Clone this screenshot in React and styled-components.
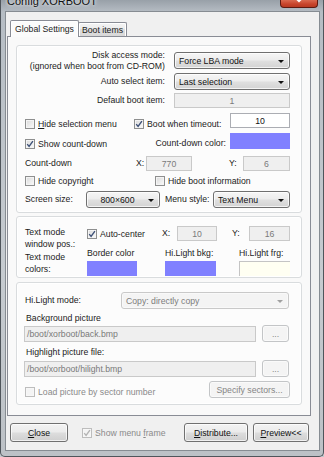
import styled, { createGlobalStyle } from 'styled-components';

const GlobalStyle = createGlobalStyle`
  html, body {
    margin: 0;
    padding: 0;
    background: #c3c8cd;
  }
  body {
    font-family: 'Liberation Sans', Arial, sans-serif;
    font-size: 8.7px;
    color: #1b1b1b;
  }
  * {
    box-sizing: border-box;
  }
`;

const Window = styled.div`
  width: 324px;
  height: 457px;
  display: flex;
  flex-direction: column;
  padding: 0 3px 5px 4px;
  border: 1px solid #4f555b;
  border-top: 0;
  border-radius: 0 0 5px 5px;
  background: linear-gradient(#98a0a8, #b6bdc4 12px, #c6cbd0 60%, #bcc1c6);
  overflow: hidden;
`;

const TitleBar = styled.div`
  height: 11px;
  flex: none;
  display: flex;
  justify-content: space-between;
  align-items: flex-start;
  overflow: hidden;
`;

const Caption = styled.div`
  margin: -6px 0 0 2px;
  font-size: 11px;
  line-height: 14px;
  color: #111;
  text-shadow: 0 0 5px #e8ecef, 0 0 3px #e8ecef;
`;

const CloseButton = styled.div`
  width: 38px;
  height: 8px;
  margin-right: 2px;
  display: flex;
  justify-content: center;
  align-items: flex-start;
  border: 1px solid #5e1a10;
  border-top: 0;
  border-radius: 0 0 4px 4px;
  background: linear-gradient(#d9694f, #c7432a 60%, #b83a22);
  overflow: hidden;
`;

const Client = styled.div`
  flex: 1;
  display: flex;
  flex-direction: column;
  background: #f0f0f0;
  border: 1px solid #868c92;
`;

const TabStrip = styled.div`
  display: flex;
  align-items: flex-end;
  height: 16px;
  margin-top: 8px;
  padding-left: 4px;
  position: relative;
  z-index: 1;
`;

const Tab = styled.div`
  height: ${(p) => (p.$active ? 17 : 14)}px;
  margin-bottom: ${(p) => (p.$active ? -1 : 0)}px;
  margin-left: ${(p) => (p.$active ? 0 : -1)}px;
  width: ${(p) => p.$w}px;
  display: flex;
  align-items: center;
  justify-content: center;
  border: 1px solid #898c95;
  border-bottom: 0;
  border-radius: 2px 2px 0 0;
  background: ${(p) => (p.$active ? '#fbfbfb' : 'linear-gradient(#f4f4f4, #ebebeb 50%, #dedede 50%, #d8d8d8)')};
  box-shadow: inset 1px 1px 0 #fff, inset -1px 0 0 #fff;
  padding-top: ${(p) => (p.$active ? 0 : 1)}px;
`;

const Panel = styled.div`
  width: 304px;
  height: 380px;
  margin-left: 1px;
  padding: 8px 8px 0;
  border: 1px solid #898c95;
  background: #f9f9f9;
`;

const Group = styled.div`
  height: ${(p) => p.$h}px;
  margin-top: ${(p) => p.$mt || 0}px;
  padding: ${(p) => p.$pt}px 11px 0 ${(p) => p.$pl}px;
  border: 1px solid #d9dcde;
  border-radius: 3px;
  background: #fcfcfc;
  box-shadow: inset 0 0 0 1px #fff;
`;

const Row = styled.div`
  display: flex;
  align-items: ${(p) => p.$align || 'center'};
  height: ${(p) => p.$h}px;
  margin-top: ${(p) => p.$mt || 0}px;
`;

const Text = styled.div`
  flex: none;
  width: ${(p) => (p.$w ? `${p.$w}px` : 'auto')};
  margin-left: ${(p) => p.$ml || 0}px;
  padding-top: ${(p) => p.$pt || 0}px;
  align-self: ${(p) => p.$self || 'auto'};
  text-align: ${(p) => (p.$right ? 'right' : 'left')};
  line-height: ${(p) => p.$lh || 11}px;
  color: ${(p) => (p.$muted ? '#8a8a8a' : 'inherit')};
  white-space: nowrap;
`;

const Cell = styled.div`
  flex: none;
  width: ${(p) => p.$w}px;
  height: ${(p) => (p.$h ? `${p.$h}px` : 'auto')};
  align-self: ${(p) => p.$self || 'auto'};
  display: flex;
  align-items: center;
`;

const SelectBox = styled.div`
  flex: none;
  width: ${(p) => p.$w}px;
  height: ${(p) => p.$h || 17}px;
  margin-left: ${(p) => p.$ml || 0}px;
  display: flex;
  align-items: center;
  padding-left: 4px;
  border: 1px solid ${(p) => (p.$disabled ? '#c9c9c9' : '#707070')};
  border-radius: 3px;
  background: ${(p) =>
    p.$disabled ? '#f4f4f4' : 'linear-gradient(#f6f6f6, #ededed 45%, #dfdfdf 55%, #d3d3d3)'};
  box-shadow: inset 0 0 0 1px ${(p) => (p.$disabled ? '#f9f9f9' : 'rgba(255,255,255,.75)')};
  color: ${(p) => (p.$disabled ? '#7d7d7d' : '#111')};
`;

const SelectText = styled.span`
  flex: 1;
  text-align: ${(p) => (p.$center ? 'center' : 'left')};
  white-space: nowrap;
`;

const Arrow = styled.span`
  flex: none;
  width: 0;
  height: 0;
  margin: 1px 5px 0 4px;
  border-left: 3px solid transparent;
  border-right: 3px solid transparent;
  border-top: 3px solid ${(p) => (p.$disabled ? '#a0a0a0' : '#111')};
`;

const TextBox = styled.div`
  flex: none;
  width: ${(p) => p.$w}px;
  height: ${(p) => p.$h || 15}px;
  margin-left: ${(p) => p.$ml || 0}px;
  align-self: ${(p) => p.$self || 'auto'};
  display: flex;
  align-items: center;
  justify-content: ${(p) => (p.$left ? 'flex-start' : 'center')};
  padding: 0 2px;
  border: 1px solid ${(p) => (p.$disabled ? '#c9c9c9' : '#abadb3')};
  background: ${(p) => (p.$disabled ? '#efefef' : '#fff')};
  color: ${(p) => (p.$disabled ? '#7a7a7a' : '#111')};
  white-space: nowrap;
`;

const Swatch = styled.div`
  flex: none;
  width: ${(p) => p.$w}px;
  height: ${(p) => p.$h || 15}px;
  margin-left: ${(p) => p.$ml || 0}px;
  margin-top: ${(p) => p.$mt || 0}px;
  background: ${(p) => p.$color};
  border-top: 1px solid ${(p) => p.$edge || p.$color};
  border-left: 1px solid ${(p) => p.$edge || p.$color};
`;

const ColorColumn = styled.div`
  flex: none;
  width: ${(p) => p.$w}px;
  align-self: flex-start;
  display: flex;
  flex-direction: column;
  line-height: 10px;
`;

const Button = styled.div`
  flex: none;
  width: ${(p) => p.$w}px;
  height: ${(p) => p.$h || 19}px;
  margin-left: ${(p) => p.$ml || 0}px;
  display: flex;
  align-items: center;
  justify-content: center;
  border: 1px solid ${(p) => (p.$disabled ? '#c3c5c7' : '#707070')};
  border-radius: 3px;
  background: ${(p) =>
    p.$disabled ? '#f4f4f4' : 'linear-gradient(#f3f3f3, #ebebeb 48%, #dddddd 52%, #cfcfcf)'};
  box-shadow: inset 0 0 0 1px ${(p) => (p.$disabled ? '#fafafa' : 'rgba(255,255,255,.7)')};
  color: ${(p) => (p.$disabled ? '#858585' : '#111')};
  white-space: nowrap;
`;

const Caption2 = styled.div`
  line-height: 10px;
  margin-top: ${(p) => p.$mt || 0}px;
  margin-left: ${(p) => p.$ml || 0}px;
`;

const BottomBar = styled.div`
  display: flex;
  align-items: center;
  height: 19px;
  margin-top: 7px;
  padding: 0 10px 0 4px;
`;

const Box = styled.span`
  flex: none;
  width: 10px;
  height: 10px;
  display: flex;
  align-items: center;
  justify-content: center;
  border: 1px solid ${(p) => (p.$disabled ? '#bdbdbd' : '#8e8f8f')};
  background: ${(p) => (p.$disabled ? '#f4f4f4' : 'linear-gradient(135deg, #d9d9d9, #fbfbfb)')};
  box-shadow: inset 0 0 0 1px ${(p) => (p.$disabled ? '#f7f7f7' : '#f4f4f4')};
`;

const CheckWrap = styled.label`
  flex: none;
  display: flex;
  align-items: center;
  height: 11px;
  margin-left: ${(p) => p.$ml || 0}px;
  margin-bottom: ${(p) => p.$mb || 0}px;
  color: ${(p) => (p.$disabled ? '#8a8a8a' : 'inherit')};
  white-space: nowrap;
`;

const CheckText = styled.span`
  margin-left: 3px;
`;

const U = styled.span`
  text-decoration: underline;
`;

function Check({ checked, disabled, children, ml, mb }) {
  return (
    <CheckWrap $disabled={disabled} $ml={ml} $mb={mb}>
      <Box $disabled={disabled}>
        {checked && (
          <svg width="8" height="8" viewBox="0 0 8 8">
            <path
              d="M1.2 4.1 L3.1 6.4 L6.9 1.1"
              fill="none"
              stroke={disabled ? '#b4b4b4' : '#3f5278'}
              strokeWidth="1.4"
            />
          </svg>
        )}
      </Box>
      <CheckText>{children}</CheckText>
    </CheckWrap>
  );
}

function Select({ w, h, ml, disabled, center, children }) {
  return (
    <SelectBox $w={w} $h={h} $ml={ml} $disabled={disabled}>
      <SelectText $center={center}>{children}</SelectText>
      <Arrow $disabled={disabled} />
    </SelectBox>
  );
}

export default function App() {
  return (
    <>
      <GlobalStyle />
      <Window>
        <TitleBar>
          <Caption>Config XORBOOT</Caption>
          <CloseButton>
            <svg width="10" height="4" viewBox="0 0 10 4">
              <path d="M1 -3 L5 1 L9 -3" fill="none" stroke="#fff" strokeWidth="2.2" />
            </svg>
          </CloseButton>
        </TitleBar>

        <Client>
          <TabStrip>
            <Tab $active $w={69}>Global Settings</Tab>
            <Tab $w={49}>Boot items</Tab>
          </TabStrip>

          <Panel>
            <Group $h={168} $pt={6} $pl={8}>
              <Row $h={17}>
                <Text $w={140} $right $lh={10.5}>
                  Disk access mode:
                  <br />
                  (ignored when boot from CD-ROM)
                </Text>
                <Select w={116} ml={9}>Force LBA mode</Select>
              </Row>
              <Row $h={17} $mt={4}>
                <Text $w={140} $right>Auto select item:</Text>
                <Select w={116} ml={9}>Last selection</Select>
              </Row>
              <Row $h={15} $mt={3}>
                <Text $w={140} $right>Default boot item:</Text>
                <TextBox $w={116} $ml={9} $disabled>1</TextBox>
              </Row>
              <Row $h={16} $mt={5} $align="flex-end">
                <Cell $w={109}>
                  <Check>
                    <U>H</U>ide selection menu
                  </Check>
                </Cell>
                <Cell $w={96}>
                  <Check checked>Boot when timeout:</Check>
                </Cell>
                <TextBox $w={60} $self="flex-start">10</TextBox>
              </Row>
              <Row $h={16} $mt={4} $align="flex-end">
                <Cell $w={109}>
                  <Check checked>Show count-down</Check>
                </Cell>
                <Text $w={92} $right>Count-down color:</Text>
                <Swatch $w={60} $h={16} $ml={4} $color="#8080ff" />
              </Row>
              <Row $h={15} $mt={7}>
                <Text $w={111}>Count-down</Text>
                <Text $w={10}>X:</Text>
                <TextBox $w={46} $disabled>770</TextBox>
                <Text $w={14} $ml={37}>Y:</Text>
                <TextBox $w={47} $disabled>6</TextBox>
              </Row>
              <Row $h={10} $mt={5}>
                <Cell $w={130}>
                  <Check>Hide copyright</Check>
                </Cell>
                <Check>Hide boot information</Check>
              </Row>
              <Row $h={17} $mt={5}>
                <Text $w={61}>Screen size:</Text>
                <Select w={74} center>
                  800×600
                </Select>
                <Text $w={48} $ml={5}>Menu style:</Text>
                <Select w={77}>Text Menu</Select>
              </Row>
            </Group>

            <Group $h={62} $mt={3} $pt={9} $pl={8}>
              <Row $h={22} $align="flex-start">
                <Text $w={62} $lh={11.5} $pt={1}>
                  Text mode
                  <br />
                  window pos.:
                </Text>
                <Cell $w={75} $h={15}>
                  <Check checked>Auto-center</Check>
                </Cell>
                <Text $w={15} $lh={15}>X:</Text>
                <TextBox $w={40} $disabled>10</TextBox>
                <Text $w={17} $ml={15} $lh={15}>Y:</Text>
                <TextBox $w={41} $disabled>16</TextBox>
              </Row>
              <Row $h={28} $align="flex-start">
                <Text $w={62} $lh={11.5} $pt={4}>
                  Text mode
                  <br />
                  colors:
                </Text>
                <ColorColumn $w={78}>
                  Border color
                  <Swatch $w={50} $mt={3} $color="#8080ff" />
                </ColorColumn>
                <ColorColumn $w={74}>
                  Hi.Light bkg:
                  <Swatch $w={51} $mt={3} $color="#8080ff" />
                </ColorColumn>
                <ColorColumn $w={51}>
                  Hi.Light frg:
                  <Swatch $w={51} $mt={3} $color="#fffff2" $edge="#c4c4c4" />
                </ColorColumn>
              </Row>
            </Group>

            <Group $h={123} $mt={4} $pt={9} $pl={7}>
              <Row $h={17}>
                <Text $w={96} $ml={1}>Hi.Light mode:</Text>
                <Select w={168} disabled>Copy: directly copy</Select>
              </Row>
              <Caption2 $mt={4} $ml={2}>Background picture</Caption2>
              <Row $h={17} $mt={2}>
                <TextBox $w={232} $h={16} $left $disabled>/boot/xorboot/back.bmp</TextBox>
                <Button $w={27} $h={17} $ml={6} $disabled>...</Button>
              </Row>
              <Caption2 $mt={5} $ml={2}>Highlight picture file:</Caption2>
              <Row $h={17} $mt={3}>
                <TextBox $w={232} $h={16} $left $disabled>/boot/xorboot/hilight.bmp</TextBox>
                <Button $w={27} $h={17} $ml={6} $disabled>...</Button>
              </Row>
              <Row $h={17} $mt={4} $align="flex-end">
                <Cell $w={185}>
                  <Check disabled ml={1} mb={1}>Load picture by sector number</Check>
                </Cell>
                <Button $w={81} $h={17} $disabled>Specify sectors...</Button>
              </Row>
            </Group>
          </Panel>

          <BottomBar>
            <Button $w={58}>
              <span>
                <U>C</U>lose
              </span>
            </Button>
            <Check checked disabled ml={14}>
              Show menu <U>f</U>rame
            </Check>
            <Button $w={64} style={{ marginLeft: 'auto' }}>
              <span>
                <U>D</U>istribute...
              </span>
            </Button>
            <Button $w={56} $ml={5}>
              <span>
                <U>P</U>review&lt;&lt;
              </span>
            </Button>
          </BottomBar>
        </Client>
      </Window>
    </>
  );
}
